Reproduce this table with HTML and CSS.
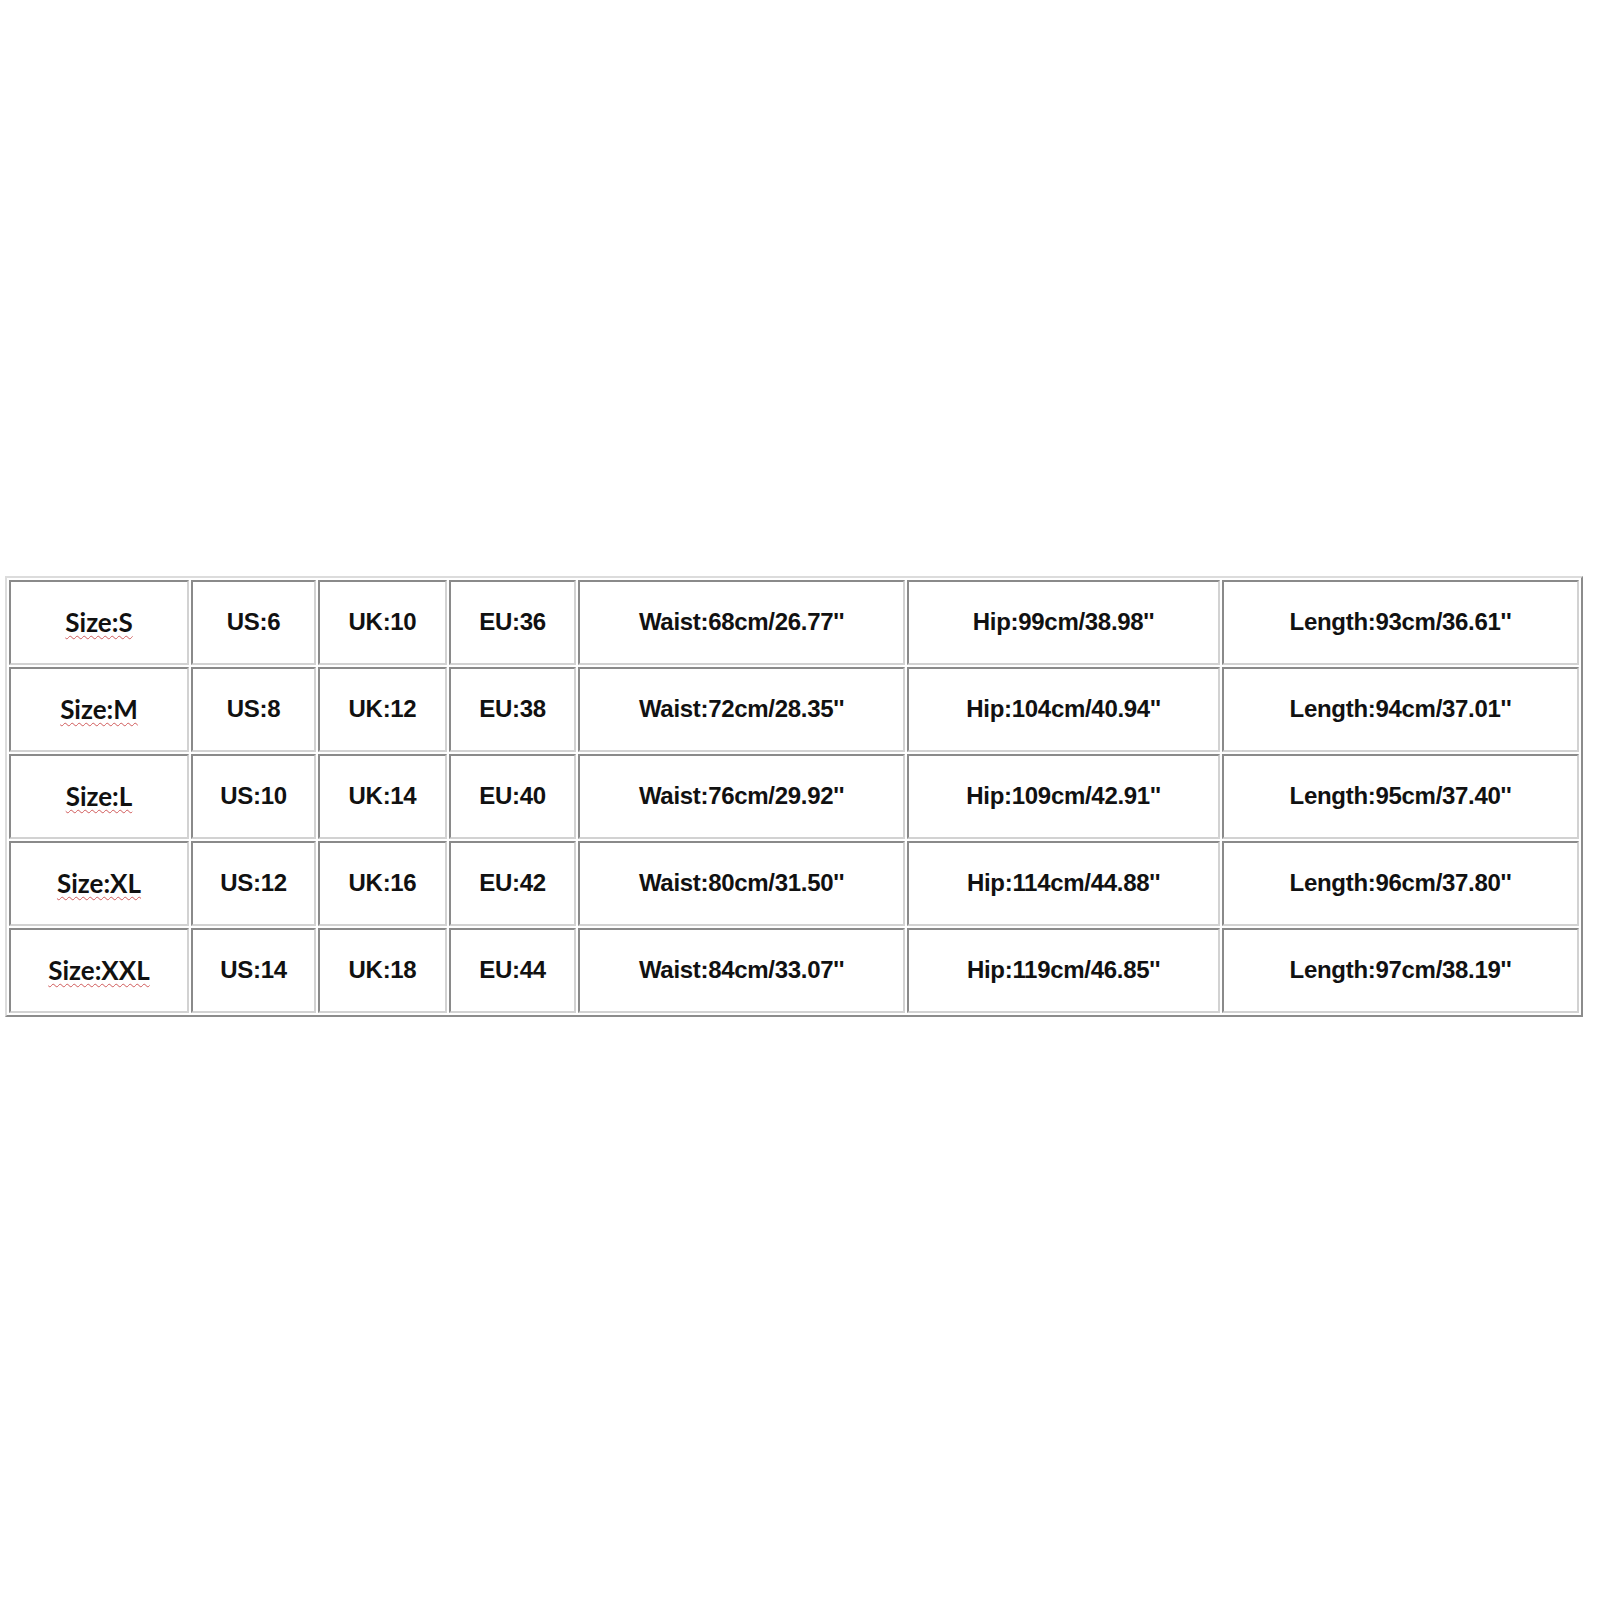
FILE: index.html
```html
<!DOCTYPE html>
<html lang="en">
<head>
<meta charset="utf-8">
<title>Size Chart</title>
<link rel="stylesheet" href="styles.css">
</head>
<body>
<table class="size-chart">
  <colgroup>
    <col class="c-size">
    <col class="c-us">
    <col class="c-uk">
    <col class="c-eu">
    <col class="c-waist">
    <col class="c-hip">
    <col class="c-length">
  </colgroup>
  <tbody>
    <tr>
      <td class="size"><span class="spell">Size:S</span></td>
      <td>US:6</td><td>UK:10</td><td>EU:36</td>
      <td>Waist:68cm/26.77''</td><td>Hip:99cm/38.98''</td><td>Length:93cm/36.61''</td>
    </tr>
    <tr>
      <td class="size"><span class="spell">Size:M</span></td>
      <td>US:8</td><td>UK:12</td><td>EU:38</td>
      <td>Waist:72cm/28.35''</td><td>Hip:104cm/40.94''</td><td>Length:94cm/37.01''</td>
    </tr>
    <tr>
      <td class="size"><span class="spell">Size:L</span></td>
      <td>US:10</td><td>UK:14</td><td>EU:40</td>
      <td>Waist:76cm/29.92''</td><td>Hip:109cm/42.91''</td><td>Length:95cm/37.40''</td>
    </tr>
    <tr>
      <td class="size"><span class="spell">Size:XL</span></td>
      <td>US:12</td><td>UK:16</td><td>EU:42</td>
      <td>Waist:80cm/31.50''</td><td>Hip:114cm/44.88''</td><td>Length:96cm/37.80''</td>
    </tr>
    <tr>
      <td class="size"><span class="spell">Size:XXL</span></td>
      <td>US:14</td><td>UK:18</td><td>EU:44</td>
      <td>Waist:84cm/33.07''</td><td>Hip:119cm/46.85''</td><td>Length:97cm/38.19''</td>
    </tr>
  </tbody>
</table>
</body>
</html>
```
FILE: styles.css
```css
html, body {
  margin: 0;
  padding: 0;
  background: #ffffff;
}

body {
  width: 1600px;
  height: 1600px;
  font-family: "Liberation Sans", Arial, sans-serif;
}

.size-chart {
  margin: 576px 0 0 5px;
  width: 1578px;
  table-layout: fixed;
  border-collapse: separate;
  border-spacing: 2px;
  border-style: solid;
  border-width: 2px;
  border-color: #dcdcdc #8c8c8c #8c8c8c #dcdcdc;
  box-sizing: border-box;
}

.c-size { width: 180px; }
.c-us { width: 125px; }
.c-uk { width: 129px; }
.c-eu { width: 127px; }
.c-waist { width: 327px; }
.c-hip { width: 313px; }
.c-length { width: 357px; }

.size-chart td {
  box-sizing: border-box;
  height: 85px;
  padding: 0 0 1px 0;
  border-style: solid;
  border-width: 2px;
  border-color: #8a8a8a #d2d2d2 #d2d2d2 #8a8a8a;
  text-align: center;
  vertical-align: middle;
  font-family: "Liberation Sans", Arial, sans-serif;
  font-weight: bold;
  font-size: 24px;
  letter-spacing: -0.3px;
  color: #111111;
  white-space: nowrap;
}

.size-chart td.size {
  font-family: Lato, "Liberation Sans", sans-serif;
  font-size: 26px;
  letter-spacing: 0;
}

.spell {
  text-decoration-line: underline;
  text-decoration-style: wavy;
  text-decoration-color: #d05a5a;
  text-decoration-thickness: 1px;
  text-underline-offset: 3px;
}
```
